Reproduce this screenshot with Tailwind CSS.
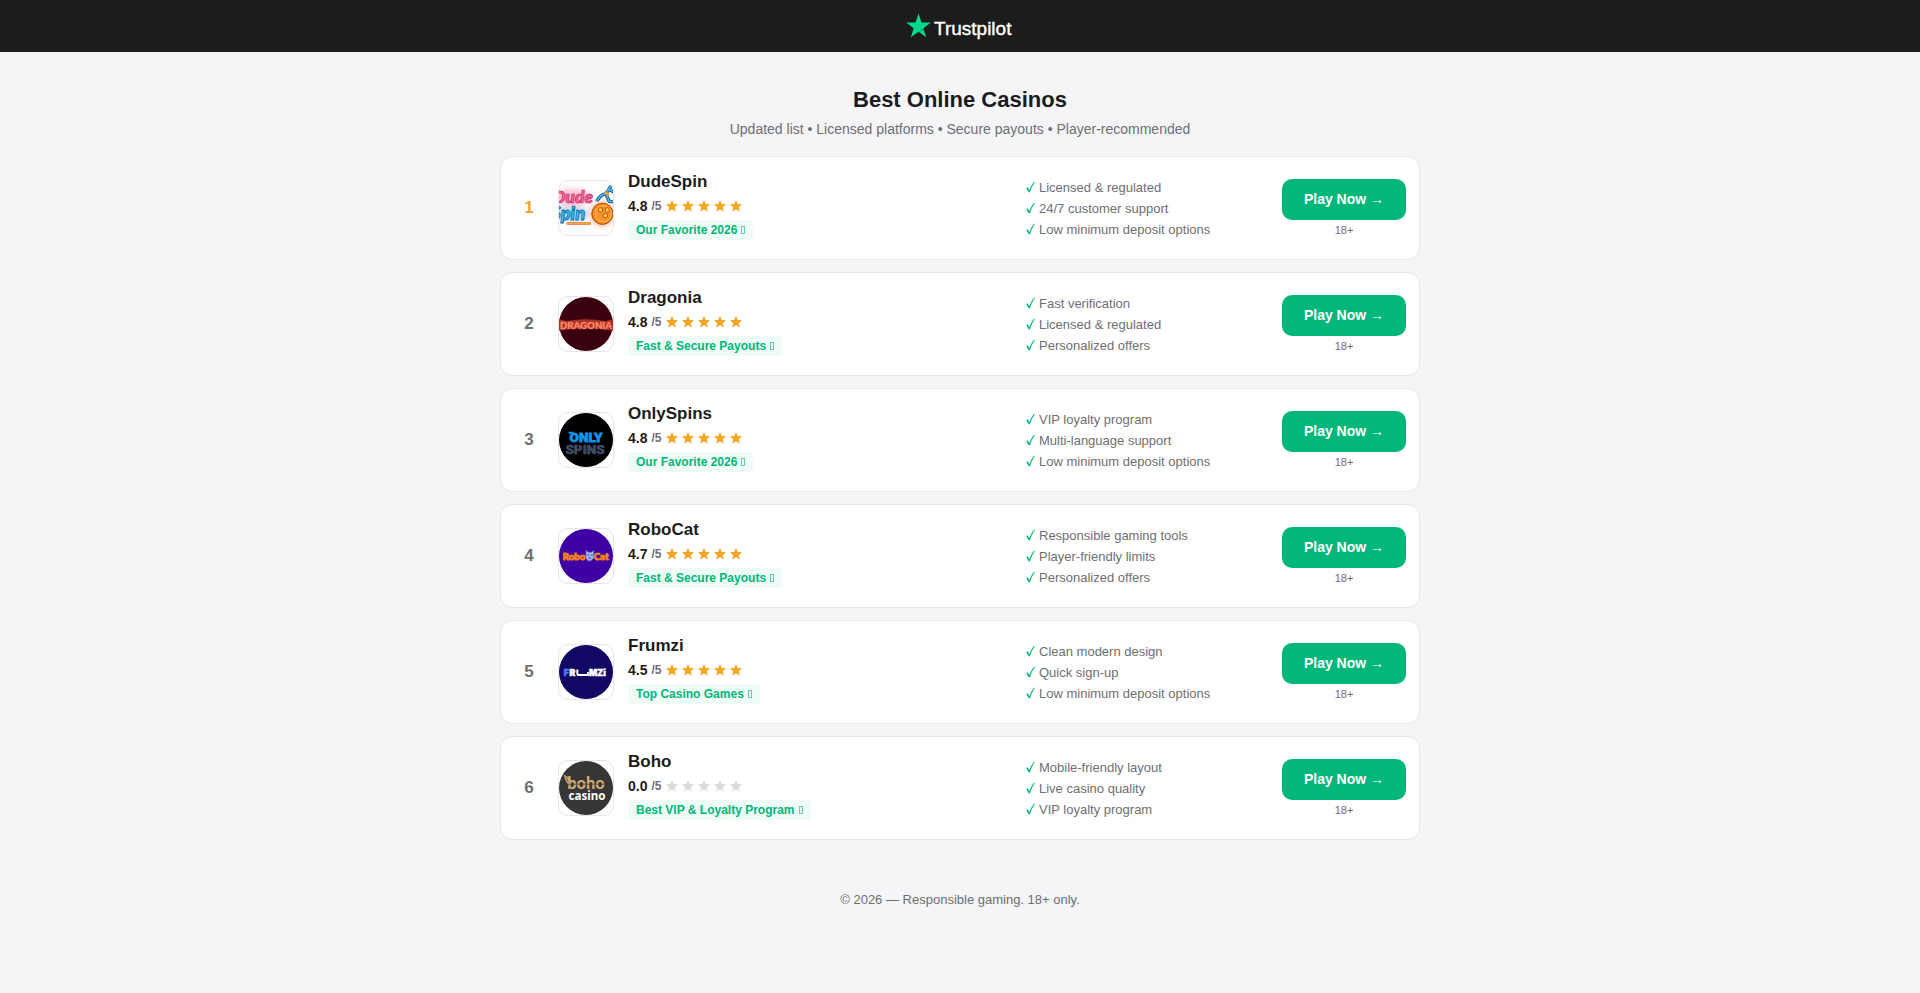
<!DOCTYPE html>
<html lang="en">
<head>
  <meta charset="UTF-8" />
  <meta name="viewport" content="width=device-width, initial-scale=1.0" />
  <title>Best Online Casinos</title>
  <script src="https://cdn.jsdelivr.net/npm/@tailwindcss/browser@4"></script>
</head>
<body class="bg-[#f5f5f8] min-h-screen font-['Liberation_Sans',Arial,sans-serif] text-[#1c1c1c]">

  <!-- HEADER -->
  <header class="bg-[#1c1c1c] h-13 flex items-center justify-center">
    <a href="#" aria-label="Trustpilot">
      <svg class="w-[110px] h-7" viewBox="0 0 110 28">
        <path fill="#04da8d" d="M13.500 1.500l3 9.100h9.500l-7.700 5.600 2.900 9-7.700-5.500-7.700 5.500 2.900-9L1 10.600h9.500z" />
        <path fill="#0aa56c" d="M19.100 18.600l-.8-2.400-4.800 3.500z" />
        <text x="29" y="23" font-family="Liberation Sans, Arial, sans-serif" font-size="19" fill="#fff" stroke="#fff" stroke-width=".4">Trustpilot</text>
      </svg>
    </a>
  </header>

  <main class="max-w-[920px] mx-auto pt-8">

    <h1 class="text-[22px] leading-8 font-bold text-center">Best Online Casinos</h1>
    <p class="text-sm leading-5 text-center text-[#6e6e73] mt-[3px] mb-[17px]">Updated list • Licensed platforms • Secure payouts • Player-recommended</p>

    <!-- CASINO LIST -->
    <div id="list" class="flex flex-col gap-3"></div>

  </main>

  <footer class="text-[13px] leading-5 text-center text-[#6e6e73] mt-[50px] pb-12">© 2026 — Responsible gaming. 18+ only.</footer>

  <!-- SCRIPT -->
  <script>
    const logos = {
      dudespin: `
        <defs>
          <filter id="glow" x="-30%" y="-60%" width="160%" height="220%" filterUnits="objectBoundingBox"><feGaussianBlur stdDeviation="2.5" /></filter>
        </defs>
        <g filter="url(#glow)" opacity=".3">
          <ellipse cx="14" cy="17" rx="20" ry="9" fill="#e8336f" />
          <ellipse cx="13" cy="34" rx="18" ry="8" fill="#1787c8" />
          <circle cx="45" cy="34" r="14" fill="#f26a2a" />
        </g>
        <g font-family="Lato, sans-serif" font-style="italic" font-weight="900">
          <text x="-6" y="23" font-size="18" fill="#f76a9c" stroke="#c41e5c" stroke-width=".7">Dude</text>
          <text x="-8" y="40" font-size="19" fill="#45c0f0" stroke="#0e5e9c" stroke-width=".8">Spin</text>
        </g>
        <path d="M39 21q4-7 10-8l5-8M48 12l4 9 6 1M50 8l8 4" fill="none" stroke="#1b5f96" stroke-width="3.500" />
        <path d="M39 21q4-7 10-8l5-8M48 12l4 9 6 1M50 8l8 4" fill="none" stroke="#4cc4ee" stroke-width="1.400" />
        <path d="M47 11l5 4" stroke="#f59a2c" stroke-width="2.500" />
        <circle cx="45" cy="34" r="11" fill="#f58a1f" stroke="#a8400f" stroke-width="1" />
        <circle cx="46" cy="34" r="8.500" fill="#f9942c" stroke="#ffc24a" stroke-width="1" />
        <g fill="#ffd44a" stroke="#b8480c" stroke-width="1"><circle cx="43" cy="30" r="2.300" /><circle cx="50" cy="30" r="2.300" /><circle cx="48" cy="36" r="2.300" /></g>
        <path d="M9 44h23" stroke="#e8661c" stroke-width="2.500" stroke-linecap="round" />
        <path d="M9 44h23" stroke="#ffb53c" stroke-width="1" stroke-linecap="round" />`,
      dragonia: `
        <circle cx="28" cy="28" r="28" fill="#3b000f" />
        <path d="M0 23l8 2q20-4 40 0l8-2v12l-7-1q-21-3-42 0l-7 1z" fill="#a8322a" />
        <text x="28" y="33" text-anchor="middle" font-family="Lato, sans-serif" font-size="10" font-weight="900" fill="#ff9a76" stroke="#f0694c" stroke-width=".5">DRAGONIA</text>`,
      onlyspins: `
        <circle cx="28" cy="28" r="28" fill="#000" />
        <g font-family="Roboto, sans-serif" font-weight="900" text-anchor="middle">
          <text x="28" y="30" font-size="14" fill="#1295ea" stroke="#1295ea" stroke-width=".8">ONLY</text>
          <text x="27" y="42" font-size="14" fill="#3f4a66" stroke="#3f4a66" stroke-width=".6">SPINS</text>
        </g>
        <path d="M10 19.500h5v2h-5z" fill="#1295ea" />
        <path d="M20 31v5" stroke="#000" stroke-width="1" />`,
      robocat: `
        <circle cx="28" cy="28" r="28" fill="#3f00a3" />
        <g font-family="Lato, sans-serif" font-size="10" font-weight="900" fill="#ffb02e" stroke="#f07a1c" stroke-width="1">
          <text x="4" y="32">Robo</text>
          <text x="36" y="32">Cat</text>
        </g>
        <path d="M28 22l2 2h4l2-2v8l-3 3h-3l-2-3z" fill="#a9bdf2" stroke="#5a6fd0" stroke-width=".8" />
        <path d="M29.500 27h2M33 27h2M31 30h2" stroke="#2d2f9c" stroke-width="1.200" />`,
      frumzi: `
        <circle cx="28" cy="28" r="28" fill="#120763" />
        <g font-family="Inter, sans-serif" font-size="9" font-weight="900" fill="#fff" stroke="#fff" stroke-width=".5">
          <text x="5" y="32" fill="#4a7dff" stroke="#4a7dff">F</text>
          <text x="11" y="32">R</text>
          <text x="31" y="32">MZi</text>
        </g>
        <path d="M19 25.500v4.500q0 1.200 1.200 1.200H30V28" fill="none" stroke="#fff" stroke-width="2" />`,
      boho: `
        <circle cx="28" cy="28" r="28" fill="#363636" />
        <path d="M5 14q7 3 8 9l-2 3q-5-5-6-12z" fill="#cdb07c" />
        <path d="M7 16l5 9M8 20l4 4" stroke="#363636" stroke-width=".7" />
        <text x="28" y="29" text-anchor="middle" font-family="Lato, sans-serif" font-size="17" font-weight="900" fill="#d0aa72">boho</text>
        <path d="M8 24h40" stroke="#363636" stroke-width=".8" />
        <text x="29" y="40" text-anchor="middle" font-family="'Noto Sans', sans-serif" font-size="12" font-weight="700" fill="#fff">casino</text>`
    };

    const casinos = [
      { name: 'DudeSpin', logo: 'dudespin', score: '4.8', badge: 'Our Favorite 2026', features: ['Licensed & regulated', '24/7 customer support', 'Low minimum deposit options'] },
      { name: 'Dragonia', logo: 'dragonia', score: '4.8', badge: 'Fast & Secure Payouts', features: ['Fast verification', 'Licensed & regulated', 'Personalized offers'] },
      { name: 'OnlySpins', logo: 'onlyspins', score: '4.8', badge: 'Our Favorite 2026', features: ['VIP loyalty program', 'Multi-language support', 'Low minimum deposit options'] },
      { name: 'RoboCat', logo: 'robocat', score: '4.7', badge: 'Fast & Secure Payouts', features: ['Responsible gaming tools', 'Player-friendly limits', 'Personalized offers'] },
      { name: 'Frumzi', logo: 'frumzi', score: '4.5', badge: 'Top Casino Games', features: ['Clean modern design', 'Quick sign-up', 'Low minimum deposit options'] },
      { name: 'Boho', logo: 'boho', score: '0.0', badge: 'Best VIP & Loyalty Program', features: ['Mobile-friendly layout', 'Live casino quality', 'VIP loyalty program'] }
    ];

    const star = '<svg class="size-3.5" viewBox="0.5 0.5 23 23" fill="currentColor"><path d="M12 17.270 18.180 21l-1.640-7.030L22 9.240l-7.190-.61L12 2 9.190 8.630 2 9.240l5.460 4.730L5.820 21z" /></svg>';
    const check = '<svg class="w-[9px] h-3 shrink-0 text-[#00b67a]" viewBox="0 0 9 12" fill="currentColor"><path d="M.3 7.200 1.700 6.300 3.300 9.200Q5.200 3.800 8.200.6L8.800.9Q5.600 5.500 3.900 11.300L2.900 11.500z" /></svg>';

    function escapeHtml(text) {
      return text.replace(/&/g, '&amp;');
    }

    document.getElementById('list').innerHTML = casinos.map((c, i) => `
      <article class="bg-white border border-[#e5e5ea] rounded-xl p-[13px] flex items-center gap-3.5">
        <div class="w-[30px] text-center text-[17px] font-bold ${i === 0 ? 'text-[#f0a32f]' : 'text-[#6e6e73]'}">${i + 1}</div>
        <div class="size-14 shrink-0 rounded-[10px] border border-[#e5e5ea] overflow-hidden">
          <svg class="size-full" viewBox="0 0 56 56">${logos[c.logo]}</svg>
        </div>
        <div class="flex-1 min-w-0">
          <h2 class="text-[17px] leading-6 font-bold">${c.name}</h2>
          <div class="flex items-center gap-1 mt-0.5 leading-5">
            <span class="text-sm leading-5 font-bold">${c.score}</span>
            <span class="text-xs leading-5 font-bold text-[#6e6e73]">/5</span>
            <span class="flex gap-0.5 ${c.score > 0 ? 'text-[#f5a623]' : 'text-[#dcdce0]'}">${star.repeat(5)}</span>
          </div>
          <div class="flex mt-1 mb-1.5">
            <span class="flex items-center gap-1 bg-[#effcf6] text-[#00b67a] text-xs leading-5 font-bold px-2 rounded">${escapeHtml(c.badge)}<i class="w-1 h-2 border border-[#00b67a]/60"></i></span>
          </div>
        </div>
        <ul class="w-[242px] text-[13px] leading-[21px] text-[#6e6e73]">
          ${c.features.map(f => `<li class="flex items-center gap-1">${check}${escapeHtml(f)}</li>`).join('')}
        </ul>
        <div class="w-[124px] text-center">
          <button class="w-full bg-[#00b67a] text-white text-sm leading-[21px] font-bold py-2.5 rounded-[10px]">Play Now →</button>
          <div class="text-[11px] leading-4 text-[#6e6e73] mt-0.5">18+</div>
        </div>
      </article>`).join('');
  </script>

</body>
</html>
